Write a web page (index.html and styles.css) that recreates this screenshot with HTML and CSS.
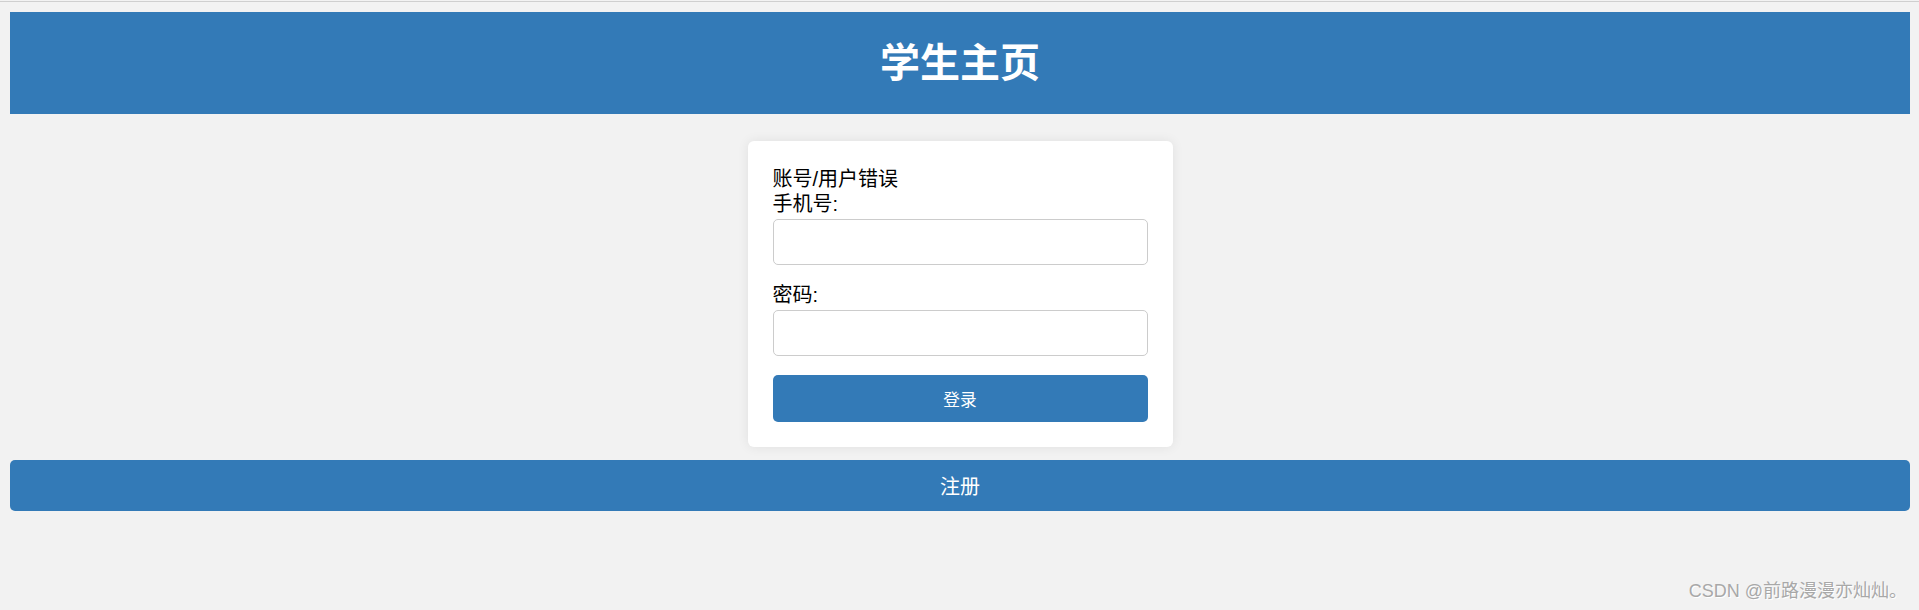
FILE: index.html
```html
<!DOCTYPE html>
<html lang="zh-CN">
<head>
<meta charset="utf-8">
<title>学生主页</title>
<link rel="stylesheet" href="styles.css">
</head>
<body>
  <header class="header">
    <h1 class="title">学生主页</h1>
  </header>
  <main class="main">
    <form class="card">
      <div class="error">账号/用户错误</div>
      <div class="group">
        <label class="label" for="phone">手机号:</label>
        <input class="input" id="phone" type="text">
      </div>
      <div class="group">
        <label class="label" for="pwd">密码:</label>
        <input class="input" id="pwd" type="password">
      </div>
      <button class="btn btn-login" type="button">登录</button>
    </form>
  </main>
  <button class="btn btn-register" type="button">注册</button>
  <div class="watermark">CSDN @前路漫漫亦灿灿。</div>
</body>
</html>
```

FILE: styles.css
```css
html {
  background: linear-gradient(#f2f2f2 0 1px, #cfcfcf 1px 2px, #f2f2f2 2px) no-repeat, #f2f2f2;
  min-height: 100%;
}

body {
  margin: 0 9px 0 10px;
  padding-top: 12px;
  font-family: "Liberation Sans", "Noto Sans CJK SC", sans-serif;
  color: #000;
}

.header {
  height: 102px;
  background: #337ab7;
  display: flex;
  align-items: center;
  justify-content: center;
}

.title {
  margin: 0;
  color: #fff;
  font-size: 40px;
  font-weight: 700;
  line-height: 48px;
}

.main {
  display: flex;
  justify-content: center;
  padding-top: 27px;
}

.card {
  width: 375px;
  padding: 26px 25px 25px;
  background: #fff;
  border-radius: 6px;
  box-shadow: 0 0 12px rgba(0, 0, 0, 0.08);
}

.error,
.label {
  display: block;
  font-size: 20px;
  line-height: 25px;
}

.group {
  margin-bottom: 18px;
}

.group + .group {
  margin-bottom: 19px;
}

.input {
  display: block;
  box-sizing: border-box;
  width: 100%;
  height: 46px;
  margin-top: 2px;
  border: 1px solid #ccc;
  border-radius: 5px;
  background: #fff;
  font-size: 20px;
  padding: 0 10px;
}

.btn {
  display: block;
  box-sizing: border-box;
  border: 0;
  background: #337ab7;
  color: #fff;
  font-family: "Liberation Sans", "Noto Sans CJK SC", sans-serif;
  cursor: pointer;
}

.btn-login {
  width: 100%;
  height: 47px;
  border-radius: 5px;
  font-size: 16.67px;
}

.btn-register {
  width: 100%;
  height: 51px;
  margin-top: 13px;
  border-radius: 5px;
  font-size: 20px;
}

.watermark {
  position: absolute;
  right: 12px;
  top: 578px;
  font-family: "Liberation Sans", "Noto Sans CJK SC", sans-serif;
  font-size: 18px;
  line-height: 26px;
  color: #a8a8a8;
  text-shadow: 1px 1px 0 #fff;
}
```
